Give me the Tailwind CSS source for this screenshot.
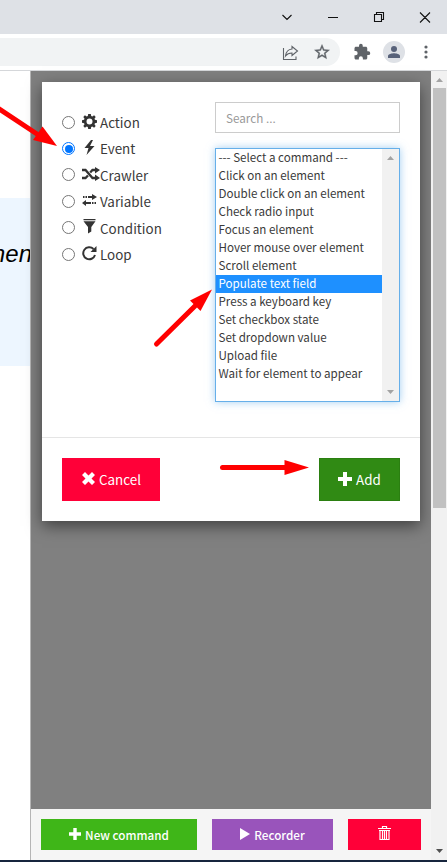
<!DOCTYPE html>
<html lang="en">
<head>
<meta charset="utf-8">
<title>Command editor</title>
<script src="https://cdn.jsdelivr.net/npm/@tailwindcss/browser@4"></script>
</head>
<body class="relative flex h-[862px] w-[447px] flex-col overflow-hidden bg-white font-['Noto_Sans_CJK_SC',sans-serif] text-[#3a3a3a]">
  <header class="shrink-0">
    <div class="flex h-[34px] items-center bg-[#dee1e6] pl-[281px]">
      <svg class="-mt-[6px] h-7 w-[166px]" viewBox="281 0 166 28" fill="none" stroke="#111" stroke-width="1.1"><path d="M282.500 12l4.500 4.500 4.500-4.500M328 14.500h10M374.500 11.500h7v7h-7zM376.500 11.500v-2h7v7h-2M420 9.500l10 10M430 9.500l-10 10" transform="translate(0 3)"/></svg>
    </div>
    <div class="flex h-[37px] border-b border-[#d5d7da] bg-white pt-1">
      <div class="flex h-7 w-[340px] items-center gap-[14px] rounded-r-full bg-[#f1f3f4] pl-[282px]">
        <svg class="size-[17px]" viewBox="0 0 17 17" fill="none" stroke="#5f6368" stroke-width="1.1"><path d="M1.500 4v11.500h12.500v-3M10 2.500l5.500 4.500-5.500 4.500V9C7 9 5 10 3.500 12 4 8 6.500 5.300 10 5z"/></svg>
        <svg class="size-[18px]" viewBox="0 0 24 24" fill="#5f6368" stroke="#5f6368" stroke-width=".5"><path d="M22 9.240l-7.190-.62L12 2 9.190 8.630 2 9.240l5.460 4.730L5.820 21 12 17.270 18.180 21l-1.630-7.030L22 9.240zM12 15.400l-3.760 2.270 1-4.280-3.320-2.880 4.380-.38L12 6.100l1.710 4.040 4.380.38-3.320 2.880 1 4.280L12 15.400z"/></svg>
      </div>
      <div class="flex h-7 items-center pl-[13px]">
        <svg class="size-[18px]" viewBox="0 0 24 24" fill="#5f6368"><path d="M20.500 11H19V7c0-1.100-.9-2-2-2h-4V3.500a2.500 2.500 0 0 0-5 0V5H4c-1.100 0-2 .9-2 2v3.800h1.500a2.700 2.700 0 0 1 0 5.400H2V20c0 1.100.9 2 2 2h3.800v-1.500a2.700 2.700 0 0 1 5.400 0V22H17c1.100 0 2-.9 2-2v-4h1.500a2.500 2.500 0 0 0 0-5z"/></svg>
        <div class="ml-3 flex size-[22px] items-center justify-center rounded-full bg-[#dee1e6]">
          <svg class="size-3" viewBox="0 0 12 12" fill="#58627a"><circle cx="6" cy="3" r="3"/><path d="M0 12V10C0 8 4 7.200 6 7.200S12 8 12 10v2z"/></svg>
        </div>
        <svg class="ml-[19px] h-[14px] w-1" viewBox="0 0 4 14" fill="#5f6368"><circle cx="2" cy="2" r="1.600"/><circle cx="2" cy="7" r="1.600"/><circle cx="2" cy="12" r="1.600"/></svg>
      </div>
    </div>
  </header>

  <div class="flex h-[789px] shrink-0">
    <div class="w-[31px] shrink-0 overflow-hidden border-r border-[#b5b5b5] bg-white pt-[127px]">
      <div class="flex h-[168px] justify-end bg-[#edf6ff] pt-[42px] font-['Liberation_Sans',sans-serif] text-[24px] leading-[28px] text-black italic"><span class="-mr-[2px]">men</span></div>
    </div>

    <main class="flex w-[400px] shrink-0 flex-col bg-[#808080]">
      <div class="h-[738px] pt-[11px] pl-[11px]">
        <section class="h-[439px] w-[378px] bg-white shadow-[0_5px_15px_rgba(0,0,0,0.5)]">
          <div class="flex h-[356px] border-b border-[#e5e5e5] pt-5 pl-5">
            <div class="w-[153px] pt-[7px] text-[13.400px] leading-[26.400px] [&_svg]:-mt-[2px]">
              <label class="flex h-[26.400px] items-center"><i class="size-[13px] rounded-full border border-[#767676]"></i><svg class="ml-[7px] mr-[3px] size-[15px]" viewBox="0 0 16 16" fill="#333"><path fill-rule="evenodd" d="M6.600 0h2.800l.4 2.200 1.200.5L12.900 1.400 14.600 3.100 13.300 5l.5 1.200 2.200.4v2.800l-2.200.4-.5 1.200 1.300 1.900-1.700 1.700-1.900-1.300-1.200.5-.4 2.200H6.600l-.4-2.200-1.200-.5-1.900 1.300-1.700-1.700L2.700 11l-.5-1.200L0 9.400V6.600l2.200-.4L2.700 5 1.400 3.100l1.700-1.700L5 2.700l1.200-.5zM8 4.800a3.200 3.200 0 1 0 0 6.400 3.200 3.200 0 0 0 0-6.400z"/></svg><span>Action</span></label>
              <label class="flex h-[26.400px] items-center"><i class="flex size-[13px] items-center justify-center rounded-full border border-[#0075ff]"><b class="size-[8px] rounded-full bg-[#0075ff]"></b></i><svg class="ml-[7px] mr-[3px] size-[15px]" viewBox="0 0 15 15" fill="#333"><path d="M9 0L2.500 8h4L4.500 15 12.500 6H8L11 0z"/></svg><span>Event</span></label>
              <label class="flex h-[26.400px] items-center"><i class="size-[13px] rounded-full border border-[#767676]"></i><svg class="ml-[7px] h-[14px] w-[18px]" viewBox="0 0 18 14" fill="none" stroke="#333" stroke-width="2.300"><path d="M0 3h3.500l7 8H14M0 11h3.500L6 8.500M8.200 5.500L10.500 3H14"/><path d="M13 0l5 3-5 3.500zM13 7.500l5 3.500-5 3z" fill="#333" stroke="none"/></svg><span>Crawler</span></label>
              <label class="flex h-[26.400px] items-center"><i class="size-[13px] rounded-full border border-[#767676]"></i><svg class="ml-[7px] mr-[3px] size-[15px]" viewBox="0 0 15 15" fill="#333"><path d="M1 3h1.500v2H1zM3.500 3H5v2H3.500zM6 3h4V1l5 3-5 3V5H6zM0 10l4-3v2h5v2H4v2zM10 9h1.500v2H10zM12.500 9H14v2h-1.500z"/></svg><span>Variable</span></label>
              <label class="flex h-[26.400px] items-center"><i class="size-[13px] rounded-full border border-[#767676]"></i><svg class="ml-[7px] mr-[3px] size-[15px]" viewBox="0 0 15 15" fill="#333"><path d="M1.500 0h12v1.300h-12zM1.500 2.300h12L9.300 8v4.500L6 14.500V8z"/></svg><span>Condition</span></label>
              <label class="flex h-[26.400px] items-center"><i class="size-[13px] rounded-full border border-[#767676]"></i><svg class="ml-[7px] mr-[3px] size-[15px]" viewBox="0 0 15 15"><path d="M11.500 3A6 6 0 1 0 13 9" fill="none" stroke="#333" stroke-width="2"/><path d="M14.500 0v6H8.500z" fill="#333"/></svg><span>Loop</span></label>
            </div>
            <div class="w-[185px]">
              <div class="h-[31px] border border-[#ccc] px-[10px] text-[11.700px] leading-[29px] text-[#999]">Search ...</div>
              <div class="mt-[15px] flex h-[254px] border border-[#66afe9] bg-white shadow-[0_0_8px_rgba(102,175,233,0.6)]">
                <div class="w-[166px] text-[11.600px] leading-[17px] whitespace-nowrap *:h-[18px] *:pl-[2.500px]">
                  <div>--- Select a command ---</div>
                  <div>Click on an element</div>
                  <div>Double click on an element</div>
                  <div>Check radio input</div>
                  <div>Focus an element</div>
                  <div>Hover mouse over element</div>
                  <div>Scroll element</div>
                  <div class="bg-[#1e90ff] text-white">Populate text field</div>
                  <div>Press a keyboard key</div>
                  <div>Set checkbox state</div>
                  <div>Set dropdown value</div>
                  <div>Upload file</div>
                  <div>Wait for element to appear</div>
                </div>
                <div class="flex w-[17px] flex-col items-center justify-between bg-[#f1f1f1] py-[7px]">
                  <svg class="h-1 w-[7px]" viewBox="0 0 7 4" fill="#a3a3a3"><path d="M0 4L3.500 0 7 4z"/></svg>
                  <svg class="h-1 w-[7px]" viewBox="0 0 7 4" fill="#a3a3a3"><path d="M0 0l3.500 4L7 0z"/></svg>
                </div>
              </div>
            </div>
          </div>
          <div class="flex justify-between px-5 pt-5 text-[13.400px] text-white">
            <button class="flex h-[43px] w-[98px] items-center gap-1 bg-[#ff0038] pl-5"><svg class="-mt-[3px] size-[13px]" viewBox="0 0 13 13" fill="#fff"><path d="M3 0l3.500 3.500L10 0l3 3-3.500 3.500L13 10l-3 3-3.500-3.500L3 13l-3-3 3.500-3.500L0 3z"/></svg><span>Cancel</span></button>
            <button class="flex h-[43px] w-[81px] items-center gap-1 border border-[#2b7f11] bg-[#308a14] pl-[18px]"><svg class="-mt-0.5 size-[14px]" viewBox="0 0 14 14" fill="#fff"><path d="M5 0h4v5h5v4H9v5H5V9H0V5h5z"/></svg><span>Add</span></button>
          </div>
        </section>
      </div>
      <footer class="flex h-[51px] gap-[15px] bg-[#f5f5f5] pt-[10px] pl-[10px] text-[11.700px] font-medium text-white">
        <button class="flex h-[31px] w-[156px] items-center justify-center gap-1 bg-[#3fb618]"><svg class="-mt-px size-[12px]" viewBox="0 0 14 14" fill="#fff"><path d="M5 0h4v5h5v4H9v5H5V9H0V5h5z"/></svg><span>New command</span></button>
        <button class="flex h-[31px] w-[121px] items-center justify-center gap-1 bg-[#9954bb]"><svg class="-mt-px h-[12px] w-[10px]" viewBox="0 0 10 12" fill="#fff"><path d="M0 0l10 6-10 6z"/></svg><span>Recorder</span></button>
        <button class="flex h-[31px] w-[73px] items-center justify-center bg-[#ff0038]"><svg class="-mt-[3px] h-[14px] w-[13px]" viewBox="0 0 13 14" fill="none" stroke="#fff"><path d="M4.500 2V.5h4V2M0 2.500h13M1 4.500h11M2 5v8.500h9V5M4.500 5v8M6.500 5v8M8.500 5v8" stroke-width="1.200"/></svg></button>
      </footer>
    </main>

    <div class="flex w-4 flex-col items-center justify-between bg-[#f1f1f1] pt-[7px] pb-[7px]">
      <div class="flex flex-col items-center">
        <svg class="h-1 w-[7px]" viewBox="0 0 7 4" fill="#a3a3a3"><path d="M0 4L3.500 0 7 4z"/></svg>
        <div class="mt-[6px] h-[420px] w-[13px] bg-[#c1c1c1]"></div>
      </div>
      <svg class="h-1 w-[7px]" viewBox="0 0 7 4" fill="#505050"><path d="M0 0l3.500 4L7 0z"/></svg>
    </div>
  </div>
  <div class="h-[2px] shrink-0 bg-[#17253d]"></div>

  <svg class="pointer-events-none absolute inset-0 h-[862px] w-[447px]" viewBox="0 0 447 862" fill="#f00" stroke="#f00" stroke-linecap="round">
    <path d="M-3 107.500L37 134" stroke-width="5"/><path d="M42.500 126.500L57 146 33 140z" stroke="none"/>
    <path d="M156.500 344L195 306" stroke-width="5"/><path d="M190 300.500L212 289.500 200.500 311z" stroke="none"/>
    <path d="M222.500 467.500H287" stroke-width="5"/><path d="M284.500 460L309 467.500 284.500 475z" stroke="none"/>
  </svg>
</body>
</html>
